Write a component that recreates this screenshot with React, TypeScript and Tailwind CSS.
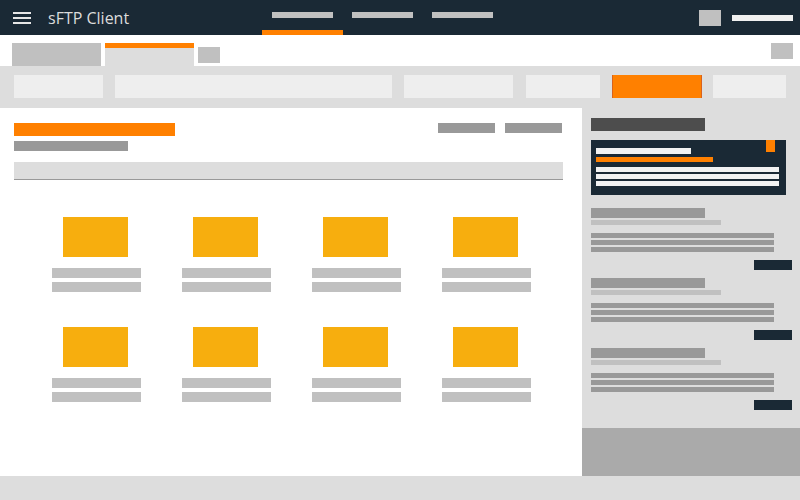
export default function App() {
  const cols = [0, 1, 2, 3];
  const sections = [0, 1, 2];

  return (
    <div className="w-[800px] h-[500px] flex flex-col overflow-hidden bg-white font-['Open_Sans',sans-serif]">
      {/* Top bar */}
      <header className="h-[35px] shrink-0 bg-[#1a2935] flex items-center">
        <div className="ml-[13px] w-[18px] flex flex-col gap-[3px]">
          <div className="h-[2px] bg-[#e6e6e6]" />
          <div className="h-[2px] bg-[#e6e6e6]" />
          <div className="h-[2px] bg-[#e6e6e6]" />
        </div>
        <div className="ml-[17px] w-[214px] text-[16px] leading-none text-[#dcdcdc]">sFTP Client</div>
        <nav className="flex h-full">
          {["active", "", ""].map((s, i) => (
            <div
              key={i}
              className={
                s
                  ? "w-[81px] h-full pt-[12px] pl-[10px] border-b-[5px] border-[#ff8000]"
                  : "w-[80px] h-full pt-[12px] pl-[9px]"
              }
            >
              <div className="w-[61px] h-[6px] bg-[#c0c0c0]" />
            </div>
          ))}
        </nav>
        <div className="ml-auto mr-[7px] flex items-center gap-[11px]">
          <div className="w-[22px] h-[16px] bg-[#c0c0c0]" />
          <div className="w-[61px] h-[6px] bg-[#f0f0f0]" />
        </div>
      </header>

      {/* Tabs */}
      <div className="h-[31px] shrink-0 flex items-end pl-[12px] pr-[7px]">
        <div className="w-[89px] h-[23px] bg-[#c0c0c0]" />
        <div className="ml-[4px] w-[89px] h-[23px] bg-[#dddddd] border-t-[5px] border-[#ff8000]" />
        <div className="ml-[4px] w-[22px] h-[16px] self-start mt-[12px] bg-[#c0c0c0]" />
        <div className="ml-auto w-[22px] h-[16px] self-start mt-[8px] bg-[#c0c0c0]" />
      </div>

      {/* Toolbar */}
      <div className="h-[42px] shrink-0 bg-[#dddddd] flex items-start pt-[9px] pl-[14px]">
        <div className="w-[89px] h-[23px] bg-[#eeeeee]" />
        <div className="ml-[12px] w-[277px] h-[23px] bg-[#eeeeee]" />
        <div className="ml-[12px] w-[109px] h-[23px] bg-[#eeeeee]" />
        <div className="ml-[13px] w-[74px] h-[23px] bg-[#eeeeee]" />
        <div className="ml-[12px] w-[90px] h-[23px] bg-[#ff8000] border-x border-[#d9621c]" />
        <div className="ml-[11px] w-[73px] h-[23px] bg-[#eeeeee]" />
      </div>

      {/* Body */}
      <div className="flex-1 flex min-h-0">
        <main className="w-[582px] bg-white pt-[15px] pl-[14px] pr-[19px]">
          <div className="flex justify-between">
            <div className="flex flex-col">
              <div className="w-[161px] h-[13px] bg-[#ff8000]" />
              <div className="mt-[5px] w-[114px] h-[10px] bg-[#999999]" />
            </div>
            <div className="flex gap-[10px] mr-[1px]">
              <div className="w-[57px] h-[10px] bg-[#999999]" />
              <div className="w-[57px] h-[10px] bg-[#999999]" />
            </div>
          </div>
          <div className="mt-[11px] h-[18px] bg-[#dddddd] border-b border-[#999999]" />

          <div className="mt-[37px] ml-[38px] grid grid-cols-[repeat(4,89px)] gap-x-[41px] gap-y-[35px]">
            {[0, 1].map((r) =>
              cols.map((c) => (
                <div key={`${r}-${c}`} className="flex flex-col">
                  <div className="ml-[11px] w-[65px] h-[40px] bg-[#f7ae0e]" />
                  <div className="mt-[11px] w-[89px] h-[10px] bg-[#c0c0c0]" />
                  <div className="mt-[4px] w-[89px] h-[10px] bg-[#c0c0c0]" />
                </div>
              ))
            )}
          </div>
        </main>

        <aside className="flex-1 flex flex-col bg-[#dddddd]">
          <div className="pt-[10px] pl-[9px] pr-[8px] flex flex-col">
            <div className="w-[114px] h-[13px] bg-[#4d4d4d]" />
            <div className="relative mt-[9px] w-[195px] h-[55px] bg-[#1a2935] pl-[5px] pt-[8px] flex flex-col">
              <div className="absolute top-0 right-[11px] w-[9px] h-[12px] bg-[#ff8000]" />
              <div className="w-[95px] h-[6px] bg-[#f2f2f2]" />
              <div className="mt-[3px] w-[117px] h-[5px] bg-[#ff8000]" />
              <div className="mt-[5px] flex flex-col gap-[2px]">
                <div className="w-[183px] h-[5px] bg-[#f2f2f2]" />
                <div className="w-[183px] h-[5px] bg-[#f2f2f2]" />
                <div className="w-[183px] h-[5px] bg-[#f2f2f2]" />
              </div>
            </div>

            <div className="mt-[13px] flex flex-col gap-[8px]">
              {sections.map((s) => (
                <div key={s} className="flex flex-col">
                  <div className="w-[114px] h-[10px] bg-[#999999]" />
                  <div className="mt-[2px] w-[130px] h-[5px] bg-[#c0c0c0]" />
                  <div className="mt-[8px] flex flex-col gap-[2px]">
                    <div className="w-[183px] h-[5px] bg-[#999999]" />
                    <div className="w-[183px] h-[5px] bg-[#999999]" />
                    <div className="w-[183px] h-[5px] bg-[#999999]" />
                  </div>
                  <div className="mt-[8px] self-end w-[38px] h-[10px] bg-[#1a2935]" />
                </div>
              ))}
            </div>
          </div>
          <div className="mt-auto h-[48px] bg-[#aaaaaa]" />
        </aside>
      </div>

      {/* Footer */}
      <footer className="h-[24px] shrink-0 bg-[#dddddd]" />
    </div>
  );
}
